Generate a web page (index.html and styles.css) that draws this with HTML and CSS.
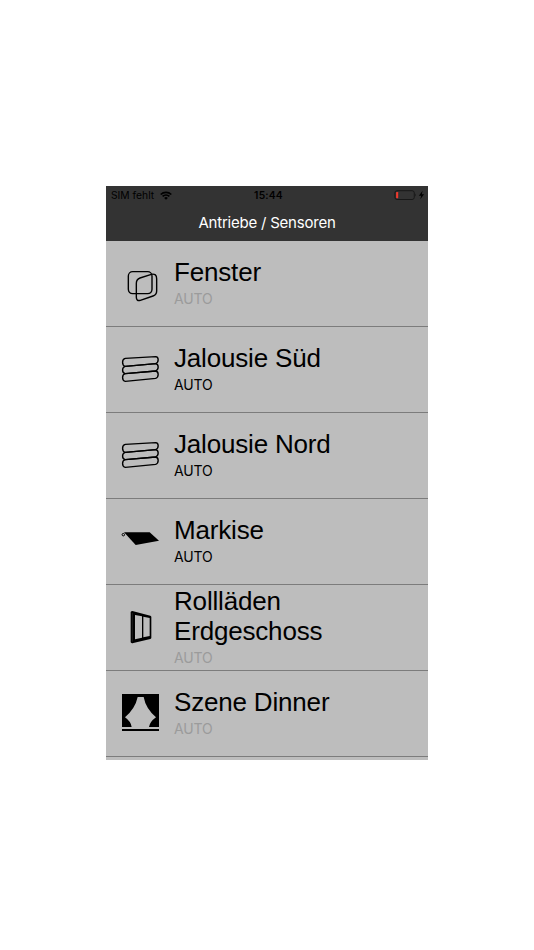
FILE: index.html
```html
<!DOCTYPE html>
<html lang="de">
<head>
<meta charset="utf-8">
<title>Antriebe / Sensoren</title>
<link rel="stylesheet" href="styles.css">
</head>
<body>
<main class="phone">
  <header class="header">
    <div class="status">
      <div class="carrier"><span>SIM fehlt</span>
        <svg class="wifi" viewBox="0 0 12 9"><path d="M.7 3.5a7.6 7.6 0 0 1 10.6 0M2.6 5.4a4.9 4.9 0 0 1 6.8 0" fill="none" stroke="#000" stroke-width="1.7"/><path d="M6 8.8 4.1 6.9a2.7 2.7 0 0 1 3.8 0z"/></svg>
      </div>
      <span class="time">15:44</span>
      <svg class="battery" viewBox="0 0 32 10"><rect x=".9" y=".7" width="19.4" height="8.8" rx="2.2" fill="none" stroke="#121212" stroke-width=".8"/><path d="M21.2 3.4q1.3 1.6 0 3.2z" fill="#121212"/><rect x="2.1" y="2" width="2.1" height="6.2" rx=".6" fill="#f03a2e"/><path d="M28.6 .8 24.9 5.8h2.3L26.3 9.300 30.1 4.300h-2.300z"/></svg>
    </div>
    <h1 class="title">Antriebe / Sensoren</h1>
  </header>
  <ul class="list">
    <li class="row">
      <svg class="icon line" viewBox="15 12 120 120"><rect x="40" y="35" width="71" height="66" rx="13"/><path d="M75 54 109 43Q125 40 125 56V93Q125 104 114 108L76 121Q64 124 64 112V70Q64 58 75 54Z"/></svg>
      <div class="text"><h2 class="name">Fenster</h2><p class="mode off">AUTO</p></div>
    </li>
    <li class="row">
      <svg class="icon line" viewBox="15 15 120 120"><path d="M31 40 122 35C132 36 132 52 122 56L31 64C20 62 20 42 31 40Z"/><path d="M31 64 122 56C132 58 132 74 122 78L31 86C20 84 20 66 31 64Z"/><path d="M31 86 122 78C132 80 132 96 122 100L31 109C20 107 20 88 31 86Z"/></svg>
      <div class="text"><h2 class="name">Jalousie Süd</h2><p class="mode">AUTO</p></div>
    </li>
    <li class="row">
      <svg class="icon line" viewBox="15 15 120 120"><path d="M31 40 122 35C132 36 132 52 122 56L31 64C20 62 20 42 31 40Z"/><path d="M31 64 122 56C132 58 132 74 122 78L31 86C20 84 20 66 31 64Z"/><path d="M31 86 122 78C132 80 132 96 122 100L31 109C20 107 20 88 31 86Z"/></svg>
      <div class="text"><h2 class="name">Jalousie Nord</h2><p class="mode">AUTO</p></div>
    </li>
    <li class="row">
      <svg class="icon" viewBox="15 6 120 120"><path d="M27 36.500H104L132 62 62 75 32 42Z"/><circle cx="25" cy="44" r="3.700" fill="none" stroke="#000" stroke-width="3"/></svg>
      <div class="text"><h2 class="name">Markise</h2><p class="mode">AUTO</p></div>
    </li>
    <li class="row">
      <svg class="icon" viewBox="15 24 120 120"><path fill-rule="evenodd" d="M47 36Q50 32 55 34L106 47Q109 48 109 51V113Q109 116 106 117L55 129Q50 131 47 127ZM60 45V118L81 113V49ZM85 50V112L104 108V54Z"/><path d="M52 39V125" stroke="#555" stroke-width="1"/></svg>
      <div class="text"><h2 class="name">Rollläden Erdgeschoss</h2><p class="mode off">AUTO</p></div>
    </li>
    <li class="row">
      <svg class="icon" viewBox="15 27 120 120"><path d="M21 27H132V126H102Q104 111 123 97Q92 70 86 36H68Q61 70 30 97Q48 110 50 126H21Z"/><path d="M21 132H132V138H21Z"/></svg>
      <div class="text"><h2 class="name">Szene Dinner</h2><p class="mode off">AUTO</p></div>
    </li>
  </ul>
</main>
</body>
</html>
```

FILE: styles.css
```css
* { box-sizing: border-box; margin: 0; padding: 0; }

body {
  background: #fff;
  padding-top: 186px;
  font-family: "Liberation Sans", Arial, sans-serif;
  color: #000;
}

.phone {
  width: 322px;
  height: 573.5px;
  margin: 0 auto;
  background: #bdbdbd;
  overflow: hidden;
}

.header { height: 55px; background: #333; }

.status {
  display: grid;
  grid-template-columns: 1fr auto 1fr;
  align-items: center;
  height: 18px;
  padding: 0 2px 0 5px;
  font: 10.3px/18px Inter, sans-serif;
}

.carrier { display: flex; align-items: center; gap: 6px; }
.wifi { width: 12px; height: 9px; }
.time { font-weight: 600; letter-spacing: .2px; }
.battery { width: 32px; height: 10px; justify-self: end; }

.title {
  color: #fff;
  font: 400 15px/38px Inter, sans-serif;
  letter-spacing: -.22px;
  text-align: center;
}

.list { list-style: none; }

.row {
  display: flex;
  align-items: center;
  height: 86px;
  padding-left: 14px;
  border-bottom: 1px solid #7c7c7c;
}

.icon { flex: none; width: 40px; height: 40px; }
.line { fill: none; stroke: #000; stroke-width: 4.2; }

.text { width: 200px; margin-left: 14px; }
.name { font-size: 26px; font-weight: 400; line-height: 30px; letter-spacing: -.18px; }
.mode { font: 14px/24px Inter, sans-serif; letter-spacing: -.15px; }
.off { color: #9b9b9b; }
```
